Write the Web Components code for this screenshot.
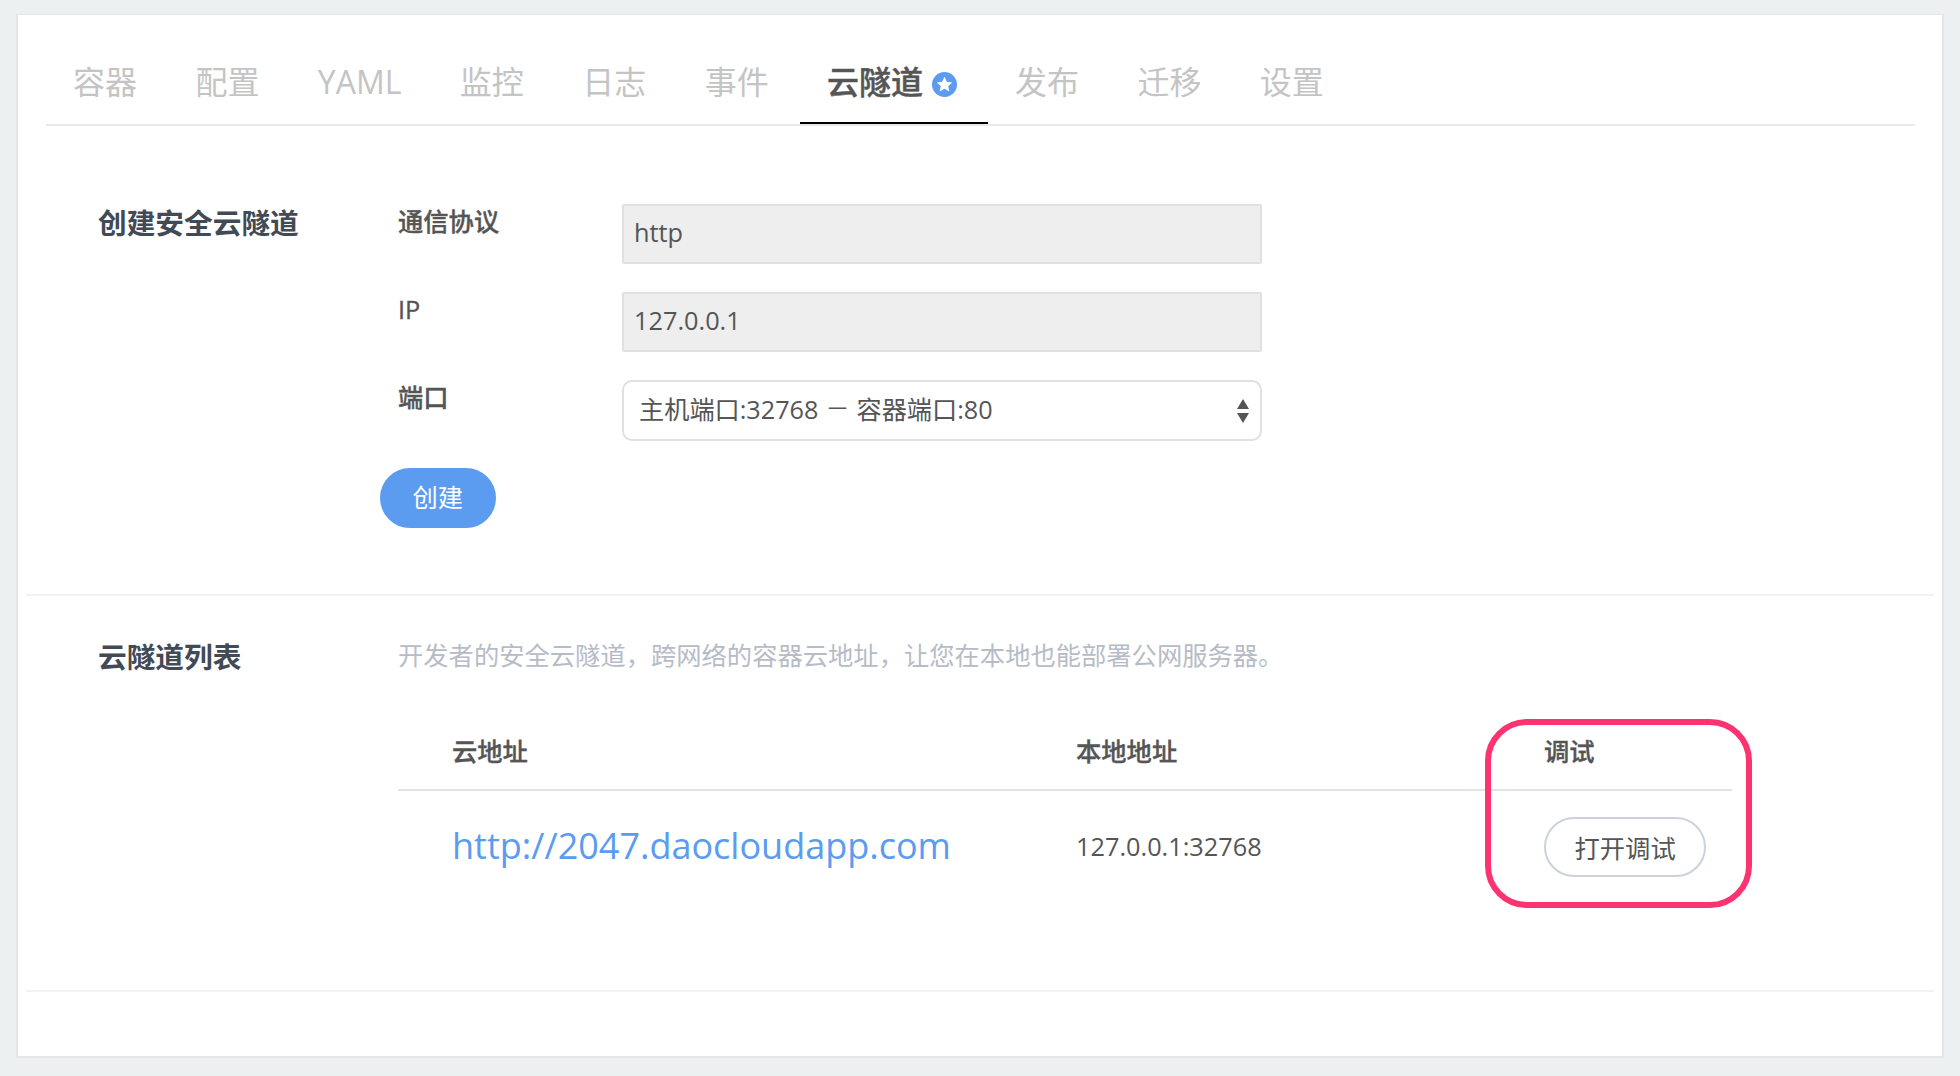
<!DOCTYPE html>
<html lang="zh">
<head>
<meta charset="utf-8">
<title>云隧道</title>
<style>
    html, body { margin: 0; padding: 0; }
    body {
        background: #ecf0f1;
        font-family: "Open Sans", "Noto Sans CJK SC", sans-serif;
        color: #555;
    }
</style>
</head>
<body>
<dao-page>
    <dao-tabs>
        <dao-tab>容器</dao-tab>
        <dao-tab>配置</dao-tab>
        <dao-tab>YAML</dao-tab>
        <dao-tab>监控</dao-tab>
        <dao-tab>日志</dao-tab>
        <dao-tab>事件</dao-tab>
        <dao-tab active star>云隧道</dao-tab>
        <dao-tab>发布</dao-tab>
        <dao-tab>迁移</dao-tab>
        <dao-tab>设置</dao-tab>
    </dao-tabs>
    <dao-section class="create" title-text="创建安全云隧道">
        <dao-field label="通信协议"><dao-input>http</dao-input></dao-field>
        <dao-field label="IP"><dao-input>127.0.0.1</dao-input></dao-field>
        <dao-field label="端口"><dao-select>主机端口:32768 <span style="font-size:19px;margin:0 3px;vertical-align:3px">一</span> 容器端口:80</dao-select></dao-field>
        <dao-button primary>创建</dao-button>
    </dao-section>
    <dao-section class="list" title-text="云隧道列表">
        <dao-hint>开发者的安全云隧道，跨网络的容器云地址，让您在本地也能部署公网服务器。</dao-hint>
        <dao-tunnel-table url="http://2047.daocloudapp.com" local="127.0.0.1:32768"></dao-tunnel-table>
    </dao-section>
</dao-page>
<script>
"use strict";
class DaoPage extends HTMLElement {
    constructor() {
        super();
        this.attachShadow({ mode: "open" });
        this.shadowRoot.innerHTML = `
            <style>
                :host {
                    display: block;
                    box-sizing: border-box;
                    width: 1928px;
                    height: 1044px;
                    margin: 14px 0 18px 16px;
                    background: #fff;
                    border: 2px solid #e4e6e7;
                    border-top-width: 1px;
                    padding: 0 8px;
                }
            </style>
            <slot></slot>
        `;
    }
}
customElements.define("dao-page", DaoPage);

class DaoTabs extends HTMLElement {
    constructor() {
        super();
        this.attachShadow({ mode: "open" });
        this.shadowRoot.innerHTML = `
            <style>
                :host {
                    display: flex;
                    margin: 0 19px 0 20px;
                    height: 111px;
                    box-sizing: border-box;
                    border-bottom: 2px solid #e8e9eb;
                }
            </style>
            <slot></slot>
        `;
    }
}
customElements.define("dao-tabs", DaoTabs);

class DaoTab extends HTMLElement {
    constructor() {
        super();
        this.attachShadow({ mode: "open" });
        this.shadowRoot.innerHTML = `
            <style>
                :host {
                    display: flex;
                    align-items: center;
                    gap: 9px;
                    height: 109px;
                    box-sizing: border-box;
                    padding: 26px 27px 0 27px;
                    margin-right: 4.4px;
                    font-size: 32px;
                    line-height: 60px;
                    color: #c4c4c4;
                    border-bottom: 2px solid transparent;
                }
                :host([active]) {
                    color: #555;
                    font-weight: 500;
                    border-bottom-color: #000;
                    padding-right: 31px;
                    margin-right: 0;
                    -webkit-text-stroke: 0.5px #555;
                }
                svg { display: none; margin-top: 6px; }
                :host([star]) svg { display: block; }
            </style>
            <slot></slot>
            <svg width="25" height="25" viewBox="0 0 25 25">
                <circle cx="12.5" cy="12.5" r="12.5" fill="#5b9bf0"/>
                <path d="M12.5 4.8l2.35 4.9 5.35.7-3.9 3.7 1 5.3-4.8-2.6-4.8 2.6 1-5.3-3.9-3.7 5.35-.7z" fill="#fff"/>
            </svg>
        `;
    }
}
customElements.define("dao-tab", DaoTab);

class DaoSection extends HTMLElement {
    constructor() {
        super();
        this.attachShadow({ mode: "open" });
        this.shadowRoot.innerHTML = `
            <style>
                :host {
                    display: grid;
                    grid-template-columns: 282px 1fr;
                    box-sizing: border-box;
                    padding-left: 72px;
                    border-bottom: 2px solid #f1f2f5;
                }
                :host(.create) { height: 470px; padding-top: 78px; }
                :host(.list) { height: 396px; padding-top: 42px; }
                h2 {
                    margin: -1px 0 0;
                    font-size: 28.7px;
                    line-height: 40px;
                    font-weight: 700;
                    color: #424a55;
                }
                #body { min-width: 0; }
            </style>
            <h2 id="title"></h2>
            <div id="body"><slot></slot></div>
        `;
        this.shadowRoot.querySelector("#title").textContent = this.getAttribute("title-text");
    }
}
customElements.define("dao-section", DaoSection);

class DaoField extends HTMLElement {
    constructor() {
        super();
        this.attachShadow({ mode: "open" });
        this.shadowRoot.innerHTML = `
            <style>
                :host {
                    display: grid;
                    grid-template-columns: 224px 640px;
                    padding-left: 18px;
                    margin-bottom: 28px;
                }
                :host(:last-of-type) { margin-bottom: 27px; }
                label {
                    font-size: 25.3px;
                    line-height: 34px;
                    font-weight: 500;
                    color: #555;
                    -webkit-text-stroke: 0.35px #555;
                }
            </style>
            <label id="label"></label>
            <slot></slot>
        `;
        this.shadowRoot.querySelector("#label").textContent = this.getAttribute("label");
    }
}
customElements.define("dao-field", DaoField);

class DaoInput extends HTMLElement {
    constructor() {
        super();
        this.attachShadow({ mode: "open" });
        this.shadowRoot.innerHTML = `
            <style>
                :host {
                    display: block;
                    box-sizing: border-box;
                    height: 60px;
                    padding: 0 10px;
                    background: #eee;
                    border: 2px solid #e0e0e0;
                    border-radius: 2px;
                    font-size: 25.3px;
                    line-height: 53px;
                    color: #555;
                }
            </style>
            <slot></slot>
        `;
    }
}
customElements.define("dao-input", DaoInput);

class DaoSelect extends HTMLElement {
    constructor() {
        super();
        this.attachShadow({ mode: "open" });
        this.shadowRoot.innerHTML = `
            <style>
                :host {
                    display: flex;
                    align-items: center;
                    justify-content: space-between;
                    box-sizing: border-box;
                    height: 61px;
                    padding: 0 11px 0 15px;
                    background: #fff;
                    border: 2px solid #e0e0e0;
                    border-radius: 10px;
                    font-size: 25.2px;
                    color: #555;
                }
                span { display: block; margin-top: -5px; }
                svg { display: block; }
            </style>
            <span><slot></slot></span>
            <svg width="12" height="24" viewBox="0 0 12 24">
                <path d="M6 0l6 10H0z M0 14h12L6 24z" fill="#555"/>
            </svg>
        `;
    }
}
customElements.define("dao-select", DaoSelect);

class DaoButton extends HTMLElement {
    constructor() {
        super();
        this.attachShadow({ mode: "open" });
        this.shadowRoot.innerHTML = `
            <style>
                :host {
                    display: inline-flex;
                    align-items: center;
                    justify-content: center;
                    box-sizing: border-box;
                    height: 60px;
                    padding: 0 28.5px;
                    border: 2px solid #ccd1dc;
                    border-radius: 30px;
                    background: #fff;
                    font-size: 25.3px;
                    color: #555;
                }
                :host([primary]) {
                    background: #5b9bf0;
                    border-color: #5b9bf0;
                    color: #fff;
                    padding: 0 30.5px 4px;
                }
            </style>
            <slot></slot>
        `;
    }
}
customElements.define("dao-button", DaoButton);

class DaoHint extends HTMLElement {
    constructor() {
        super();
        this.attachShadow({ mode: "open" });
        this.shadowRoot.innerHTML = `
            <style>
                :host {
                    display: block;
                    margin: -1px 0 1px 18px;
                    font-size: 25.3px;
                    line-height: 36px;
                    color: #b6bcc7;
                }
            </style>
            <slot></slot>
        `;
    }
}
customElements.define("dao-hint", DaoHint);

class DaoTunnelTable extends HTMLElement {
    constructor() {
        super();
        this.attachShadow({ mode: "open" });
        this.shadowRoot.innerHTML = `
            <style>
                :host {
                    display: block;
                    position: relative;
                    width: 1334px;
                    margin: 61px 0 0 18px;
                    font-size: 25.3px;
                    color: #555;
                }
                #grid {
                    display: grid;
                    grid-template-columns: 624px 468px 1fr;
                    padding-left: 54px;
                }
                .head {
                    font-weight: 500;
                    line-height: 34px;
                    padding-bottom: 21px;
                    border-bottom: 2px solid #e3e3e3;
                    margin-bottom: 26px;
                    -webkit-text-stroke: 0.35px #555;
                }
                .head:first-child { margin-left: -54px; padding-left: 54px; }
                .cell { display: flex; align-items: center; height: 60px; }
                .text { box-sizing: border-box; padding-bottom: 3px; }
                a { color: #5b9bf0; font-size: 36px; text-decoration: none; }
                #mark {
                    position: absolute;
                    left: 1086.5px;
                    top: -15px;
                    width: 267.5px;
                    height: 189px;
                    box-sizing: border-box;
                    border: 6.5px solid #fb3370;
                    border-radius: 42px;
                    pointer-events: none;
                }
            </style>
            <div id="grid">
                <div class="head">云地址</div>
                <div class="head">本地地址</div>
                <div class="head">调试</div>
                <div class="cell text"><a id="url" href="#"></a></div>
                <div class="cell text" id="local"></div>
                <div class="cell"><dao-button>打开调试</dao-button></div>
            </div>
            <div id="mark"></div>
        `;
        const url = this.shadowRoot.querySelector("#url");
        url.textContent = this.getAttribute("url");
        this.shadowRoot.querySelector("#local").textContent = this.getAttribute("local");
    }
}
customElements.define("dao-tunnel-table", DaoTunnelTable);
</script>
</body>
</html>
